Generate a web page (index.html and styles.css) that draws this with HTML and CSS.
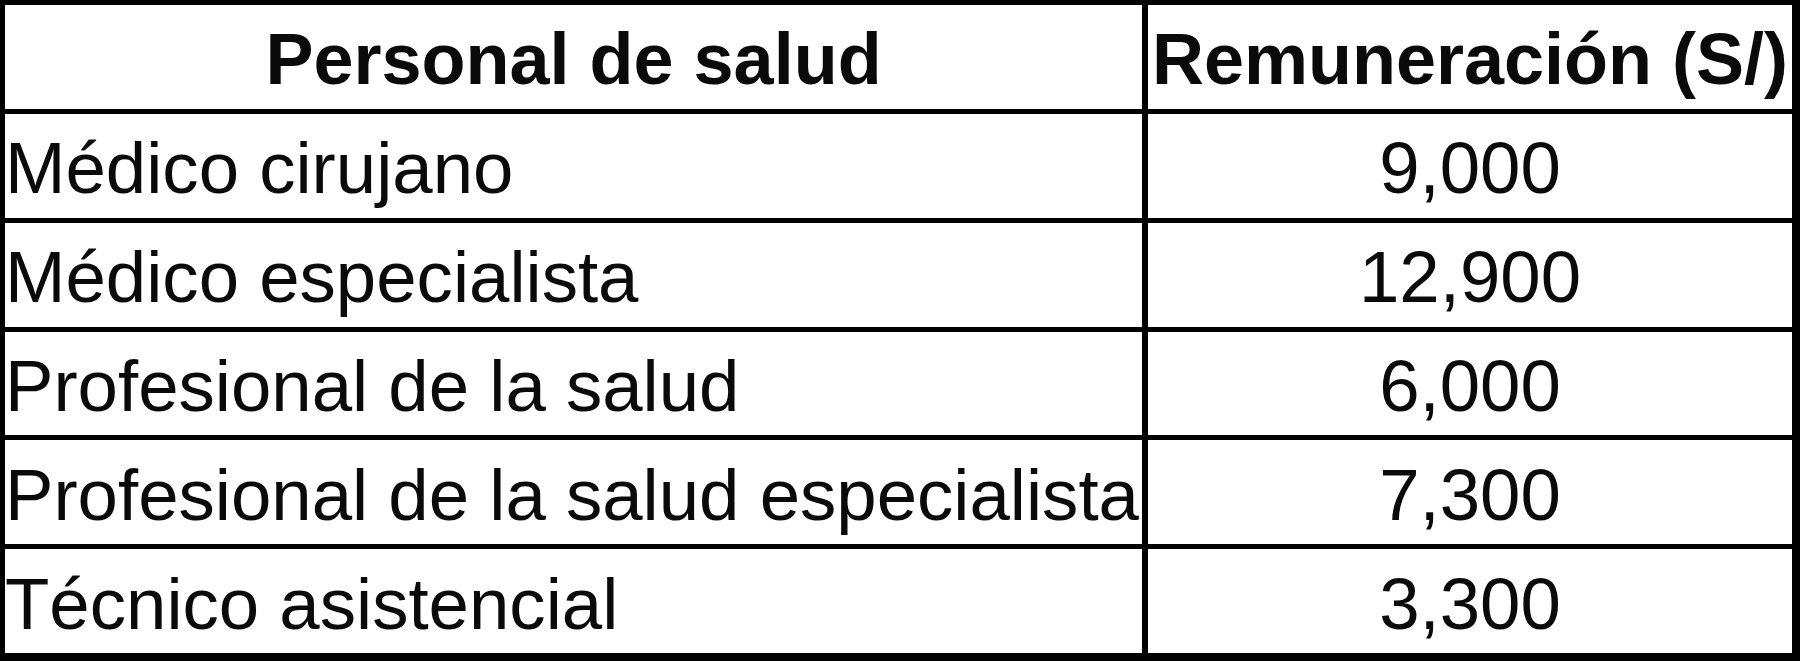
FILE: index.html
```html
<!DOCTYPE html>
<html lang="es">
<head>
<meta charset="utf-8">
<title>Remuneración personal de salud</title>
<link rel="stylesheet" href="styles.css">
</head>
<body>
<div class="table">
  <div class="cell head">Personal de salud</div>
  <div class="cell head">Remuneración (S/)</div>
  <div class="cell name">Médico cirujano</div>
  <div class="cell num">9,000</div>
  <div class="cell name">Médico especialista</div>
  <div class="cell num">12,900</div>
  <div class="cell name">Profesional de la salud</div>
  <div class="cell num">6,000</div>
  <div class="cell name">Profesional de la salud especialista</div>
  <div class="cell num">7,300</div>
  <div class="cell name">Técnico asistencial</div>
  <div class="cell num">3,300</div>
</div>
</body>
</html>
```

FILE: styles.css
```css
html, body {
  margin: 0;
  padding: 0;
  background: #ffffff;
}
.table {
  box-sizing: border-box;
  width: 1800px;
  height: 661px;
  background: #000000;
  padding: 5px 8px 8px 5px;
  display: grid;
  grid-template-columns: 1137px 1fr;
  grid-template-rows: repeat(6, 1fr);
  column-gap: 6px;
  row-gap: 5px;
  font-family: "Liberation Sans", Arial, sans-serif;
  font-size: 72.6px;
  color: #0a0a0a;
}
.cell {
  background: #ffffff;
  display: flex;
  align-items: center;
  white-space: nowrap;
  overflow: hidden;
  padding-top: 4px;
  box-sizing: border-box;
}
.head {
  font-weight: bold;
  font-size: 72px;
  justify-content: center;
}
.name {
  justify-content: flex-start;
  padding-left: 0;
}
.num {
  justify-content: center;
}
```
